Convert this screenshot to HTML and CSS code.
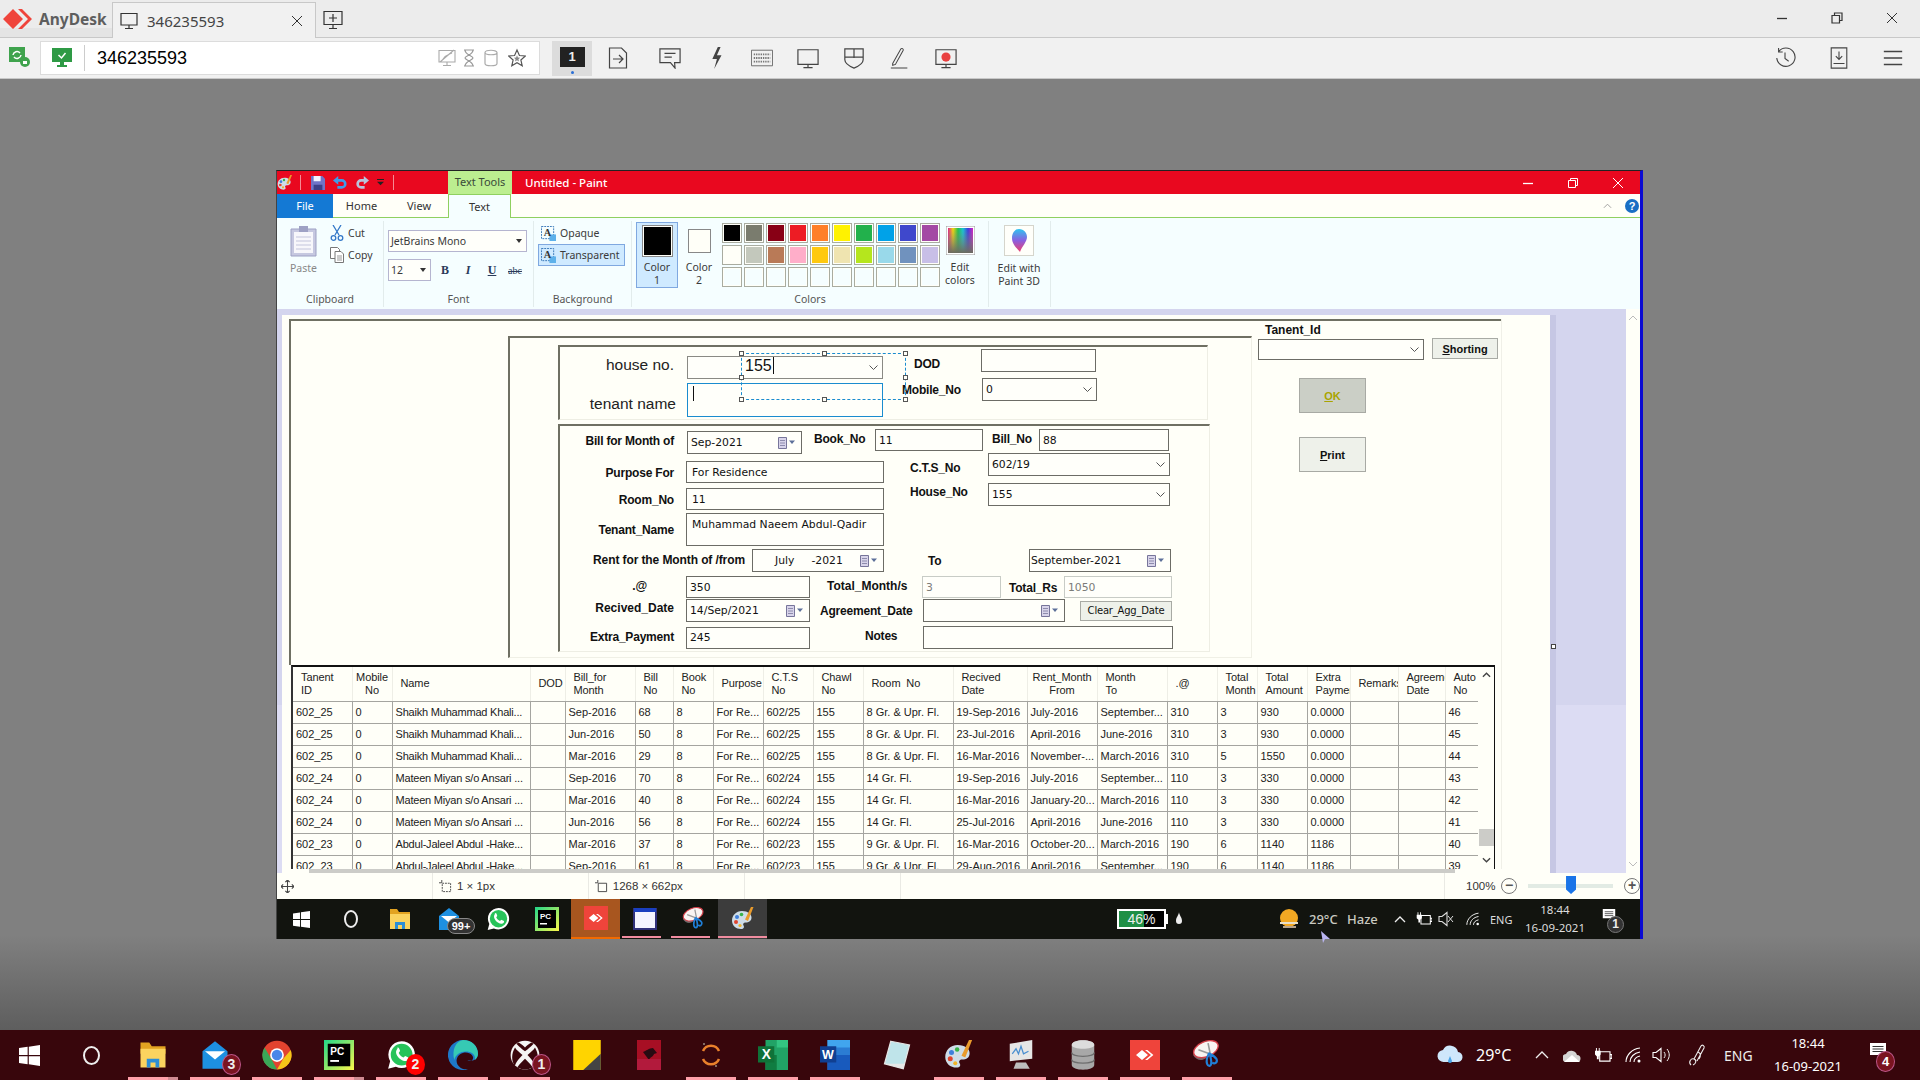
FILE: index.html
```html
<!DOCTYPE html>
<html lang="en">
<head>
    <meta charset="UTF-8">
    <title>AnyDesk - 346235593</title>
    <link rel="stylesheet" href="styles.css">
</head>
<body>
<svg class="defs" aria-hidden="true">
    <defs>
        <linearGradient id="g-spectrum" x1="0" x2="1" y1="0" y2="0">
            <stop offset="0" stop-color="#e0218a"/><stop offset=".2" stop-color="#f5d90a"/><stop offset=".4" stop-color="#1fc24a"/><stop offset=".6" stop-color="#14c6d8"/><stop offset=".8" stop-color="#3a3ae0"/><stop offset="1" stop-color="#d81fc4"/>
        </linearGradient>
        <linearGradient id="g-fade" x1="0" x2="0" y1="0" y2="1">
            <stop offset="0" stop-color="#888" stop-opacity="0"/><stop offset="1" stop-color="#6b6b5f"/>
        </linearGradient>
        <linearGradient id="g-drop" x1="0" x2="0" y1="0" y2="1">
            <stop offset="0" stop-color="#2ec4f0"/><stop offset=".5" stop-color="#8a5fe0"/><stop offset="1" stop-color="#ee3f6c"/>
        </linearGradient>
        <linearGradient id="g-pc" x1="0" x2="1" y1="0" y2="1">
            <stop offset="0" stop-color="#21d789"/><stop offset="1" stop-color="#fcf84a"/>
        </linearGradient>
        <symbol id="i-win" viewBox="0 0 18 18"><path fill="currentColor" d="M0 2.6 7.4 1.5v7.1H0zM8.4 1.4 18 0v8.6H8.4zM0 9.6h7.4v7L0 15.5zM8.4 9.6H18V18l-9.6-1.4z"/></symbol>
        <symbol id="i-mark" viewBox="0 0 30 20"><path fill="currentColor" d="M10 0 20 10 10 20 0 10zM15 0h4l10 10-10 10h-4l10-10z"/></symbol>
        <symbol id="i-screen" viewBox="0 0 18 18"><path fill="none" stroke="currentColor" stroke-width="1.2" d="M1 1.5h16v11.5H1zM9 13v3M5 16.500h8"/></symbol>
        <symbol id="i-chev" viewBox="0 0 9 5"><path fill="none" stroke="#555" d="M.5.5 4.500 4.500 8.500.5"/></symbol>
        <symbol id="i-cal" viewBox="0 0 17 12"><path fill="#d8d4ea" stroke="#77759a" d="M.5.5h8v11h-8z"/><path stroke="#8e8cad" d="M2 3.500h5M2 6h5M2 8.500h5"/><path fill="#5c6f99" d="M11 3.500h6l-3 3.500z"/></symbol>
        <symbol id="i-folder" viewBox="0 0 24 24"><path fill="#e2a321" d="M2 2h7l2 3h11v6H2z"/><path fill="#fbd35f" d="M2 7h20v15H2z"/><path fill="#2c8ed6" d="M7 15h10v7h-3v-4h-4v4H7z"/></symbol>
        <symbol id="i-mail" viewBox="0 0 24 24"><path fill="#1d90e2" d="M2 9 12 1l10 8v14H2z"/><path fill="#fff" d="M4 9h16l-8 6.500z"/></symbol>
        <symbol id="i-wa" viewBox="0 0 24 24"><path fill="#fff" d="M12.500 1A10.700 10.700 0 0 0 3.300 17L1.700 23l6.200-1.600A10.700 10.700 0 1 0 12.500 1z"/><circle cx="12.500" cy="11.700" r="8.700" fill="#27c35a"/><path fill="#fff" d="M8.500 6.500c1-.8 1.600-.6 2 .3l.7 1.600c.2.6-.7 1.300-1 1.900.8 1.700 2 2.900 3.800 3.700.6-.3 1.200-1.300 1.800-1.100l1.700.9c.7.3.8 1 .2 1.900-1.200 1.500-3.400 1.300-5.800-.2-3-1.900-5.600-6.200-2.400-9z"/></symbol>
        <symbol id="i-pc" viewBox="0 0 24 24"><rect width="24" height="24" fill="url(#g-pc)"/><rect x="3" y="3" width="18" height="18" fill="#000"/><text x="5" y="12" font-family="Liberation Sans" font-size="8" font-weight="700" fill="#fff">PC</text><rect x="5" y="16" width="7" height="1.500" fill="#fff"/></symbol>
        <symbol id="i-paint" viewBox="0 0 24 24"><path fill="#cfdde8" d="M11 4C5 4 1 8.500 1 13.500c0 5 4 8.500 9 8.500 3 0 3.500-2 2.500-3.500-1-1.500 0-3 2-3 3.500 0 6-1.500 6-5S17 4 11 4z"/><circle cx="6" cy="10" r="2" fill="#3f7fdc"/><circle cx="10.500" cy="7.500" r="1.800" fill="#38b44a"/><circle cx="5" cy="15" r="2" fill="#e0452f"/><circle cx="9" cy="18.500" r="1.600" fill="#f0b429"/><path fill="#e99b2c" d="M20 0h2.500L17 14l-3-1.500z"/></symbol>
        <symbol id="i-snip" viewBox="0 0 28 28"><path fill="#8e8488" opacity=".75" d="M1 14c2-3 8-3 11 0l1 3c-4 3-9 2-12-3z"/><ellipse cx="13" cy="8.500" rx="12" ry="7" transform="rotate(-22 13 8.500)" fill="#f8f4f2" stroke="#d5404a" stroke-width="1.300"/><path fill="none" stroke="#9a9a9a" stroke-width="1.500" d="M6 9l11 4M15 3l2 10"/><path fill="none" stroke="#1f7fd8" stroke-width="2" d="M16 12c-2 4-3 7-2 10 1 3 4 3 4-1 0-3-1-5-1-8 2 1 5 3 6 5 1 3-2 5-4 3"/></symbol>
        <symbol id="i-tile" viewBox="0 0 30 30"><rect width="30" height="30" fill="#ef443b"/><svg x="6" y="10" width="18" height="10" viewBox="0 0 30 20" preserveAspectRatio="none"><path fill="#fff" d="M10 0 20 10 10 20 0 10zM15 0h4l10 10-10 10h-4l10-10z"/></svg></symbol>
        <symbol id="i-bubble" viewBox="0 0 18 18"><path fill="#fff" d="M1 0h16v12h-3v4l-4-4H1z"/><path stroke="#333" d="M3.500 3.500h11M3.500 6h11M3.500 8.500h11"/></symbol>
        <symbol id="i-wifi" viewBox="0 0 18 16"><path fill="none" stroke="currentColor" stroke-width="1.100" d="M1 15C1 8 7 2 15 1M5 15c0-5 4-9 10-10M9 15c0-3 2-5 6-6"/><circle cx="14" cy="14" r="1.500" fill="currentColor"/></symbol>
        <symbol id="i-power" viewBox="0 0 20 16"><path fill="none" stroke="currentColor" stroke-width="1.200" d="M7 4h11v10H7zM18 7h2v4h-2"/><path fill="currentColor" d="M3 0h1v3h2V0h1v3h1v4L6 9v3H4V9L2 7V3h1z"/></symbol>
        <symbol id="i-speaker" viewBox="0 0 12 16"><path fill="none" stroke="currentColor" stroke-width="1.100" d="M1 5.500h3L9 1.500v13l-5-4H1z"/></symbol>
        <symbol id="i-a" viewBox="0 0 16 16"><path fill="none" stroke="#3273b5" stroke-dasharray="2 1" d="M.5.500h13v13H.5z"/><rect x="9" y="9" width="7" height="7" fill="#5db1ea"/><text x="3" y="11" font-family="Liberation Serif" font-size="11" font-weight="700" fill="#333">A</text></symbol>
    </defs>
</svg>

<div class="app">
    <header class="tabbar">
        <div class="brand">
            <svg class="brand-mark"><use href="#i-mark"/></svg>
            <span class="brand-name">AnyDesk</span>
        </div>
        <div class="session-tab">
            <svg class="tab-screen"><use href="#i-screen"/></svg>
            <span class="tab-id">346235593</span>
            <svg class="tab-close" viewBox="0 0 12 12"><path stroke="#333" d="M1 1l10 10M11 1 1 11"/></svg>
        </div>
        <svg class="new-tab" viewBox="0 0 20 20"><path fill="none" stroke="#333" stroke-width="1.200" d="M1 1.500h18v13H1zM10 15v3M6 18.500h8M10 4v8M6 8h8"/></svg>
        <div class="ctl-buttons">
            <svg viewBox="0 0 12 12"><path stroke="#333" stroke-width="1.300" d="M1 6.500h10"/></svg>
            <svg viewBox="0 0 12 12"><path fill="none" stroke="#333" stroke-width="1.200" d="M1 3.500h7.500V11H1zM3.500 3.500V1H11v7.500H8.500"/></svg>
            <svg viewBox="0 0 12 12"><path stroke="#333" d="M1 1l10 10M11 1 1 11"/></svg>
        </div>
    </header>

    <nav class="toolbar">
        <svg class="tb-perm" viewBox="0 0 22 22"><path fill="#3fa34d" d="M0 0h16v15H0z"/><circle cx="16" cy="15" r="5" fill="#3fa34d"/><path stroke="#fff" stroke-width="1.500" fill="none" d="M4 8a4 4 0 0 1 7-2M12 8a4 4 0 0 1-7 2"/><path fill="#fff" d="M14 14h4v3h-4z"/></svg>
        <div class="address">
            <svg class="addr-ok" viewBox="0 0 20 20"><path fill="#2e9a45" d="M0 0h20v14H0zM8 14h4v3h3v2H5v-2h3z"/><path fill="none" stroke="#fff" stroke-width="1.500" d="M6.500 7l3 3 4-5"/></svg>
            <span class="addr-text">346235593</span>
            <svg class="addr-icon" viewBox="0 0 18 18"><path fill="none" stroke="#aaa" stroke-width="1.100" d="M1 1.500h16V13H1zM9 13v3M5 16.500h8M2 13 16 1M5 10c3-4 7-5 9-6"/></svg>
            <svg class="addr-icon" viewBox="0 0 18 18"><path fill="none" stroke="#999" stroke-width="1.200" d="M4 1h10M4 17h10M5 1c0 5 8 6 8 8s-8 3-8 8M13 1c0 5-8 6-8 8s8 3 8 8"/></svg>
            <svg class="addr-icon" viewBox="0 0 18 18"><path fill="none" stroke="#aaa" stroke-width="1.200" d="M3 3.500v11c0 3 12 3 12 0v-11c0-3-12-3-12 0zM3 3.500c0 3 12 3 12 0"/></svg>
            <svg class="addr-icon" viewBox="0 0 20 20"><path fill="none" stroke="#555" stroke-width="1.300" d="M10 1l2.700 6.200 6.600.6-5 4.400 1.500 6.500-5.800-3.400-5.800 3.400 1.500-6.500-5-4.400 6.600-.6z"/><path fill="#888" d="M10 7l1 2.400 2.500.2-1.900 1.700.6 2.500-2.200-1.300-2.200 1.300.6-2.500-1.900-1.700 2.500-.2z"/></svg>
        </div>
        <div class="display-btn"><span class="display-chip">1</span><i class="display-dot"></i></div>
        <svg class="tb-icon tb-send" viewBox="0 0 20 22"><path fill="none" stroke="#444" stroke-width="1.200" d="M1.500 1h12l5 5v15h-17zM5 12h10M11 8l4 4-4 4"/></svg>
        <svg class="tb-icon tb-chat" viewBox="0 0 24 24"><path fill="none" stroke="#444" stroke-width="1.300" d="M1 2h22v15h-6l.5 6-5-6H1zM6 7h12M6 11h8"/></svg>
        <svg class="tb-icon" viewBox="0 0 22 24"><path fill="#444" d="M13 0 7 13h5l-3 11 8-15h-5l4-9z"/></svg>
        <svg class="tb-icon" viewBox="0 0 24 20"><path fill="none" stroke="#666" d="M.5 1.500h23v17H.5z"/><path stroke="#777" stroke-width="2" stroke-dasharray="1.500 1" d="M3 6h18M3 10h18M3 14h18"/></svg>
        <svg class="tb-icon" viewBox="0 0 24 24"><path fill="none" stroke="#444" stroke-width="1.300" d="M1 3h22v16H1zM12 19v3M7 22.500h10"/></svg>
        <svg class="tb-icon" viewBox="0 0 22 24"><path fill="none" stroke="#444" stroke-width="1.300" d="M1 2h20v12c0 4-5 7-10 9-5-2-10-5-10-9zM11 2v10M1 11h20"/></svg>
        <svg class="tb-icon" viewBox="0 0 24 24"><path fill="none" stroke="#444" stroke-width="1.100" d="M4 18 13 2c1-1 3 0 2.500 1.500L7 19l-3 1zM2 23h18"/></svg>
        <svg class="tb-icon" viewBox="0 0 24 24"><path fill="none" stroke="#444" stroke-width="1.300" d="M1 3h22v16H1zM12 19v3M7 22.500h10"/><circle cx="12" cy="11" r="5" fill="#e94040"/></svg>
        <div class="tb-right">
            <svg class="tb-icon" viewBox="0 0 24 24"><path fill="none" stroke="#444" stroke-width="1.200" d="M5 5a10 10 0 1 1-2 7M5 1v4.500h4.500M12 6v6.500l4 3"/></svg>
            <svg class="tb-icon" viewBox="0 0 20 24"><path fill="none" stroke="#444" stroke-width="1.200" d="M1.500 1h17v22h-17zM10 5v8M6.500 10l3.500 3.500 3.500-3.500M4 18h12"/></svg>
            <svg class="tb-icon" viewBox="0 0 24 24"><path stroke="#444" stroke-width="1.600" d="M2 5h20M2 12h20M2 19h20"/></svg>
        </div>
    </nav>

    <main class="remote">
        <section class="paint-window">
            <div class="titlebar">
                <div class="qat">
                    <svg class="qat-logo"><use href="#i-paint"/></svg>
                    <i class="qat-sep"></i>
                    <svg class="qat-btn" viewBox="0 0 16 16"><path fill="#6f74c8" d="M0 0h13l3 3v13H0z"/><path fill="#f4f4ff" d="M3 0h8v6H3z"/><path fill="#3c3f87" d="M3 10h10v6H3z"/></svg>
                    <svg class="qat-btn" viewBox="0 0 16 16"><path fill="none" stroke="#3f9be8" stroke-width="3" d="M4 5h6a4 4 0 0 1 0 8H5"/><path fill="#3f9be8" d="M6 0v10L0 5z"/></svg>
                    <svg class="qat-btn" viewBox="0 0 16 16"><path fill="none" stroke="#b8c4dc" stroke-width="3" d="M12 5H7a4 4 0 0 0 0 8h4"/><path fill="#b8c4dc" d="M10 0v10l6-5z"/></svg>
                    <svg class="qat-more" viewBox="0 0 8 8"><path fill="#222" d="M0 0h8v1H0zM0 3h8L4 7z"/></svg>
                    <i class="qat-sep"></i>
                </div>
                <div class="context-tab">Text Tools</div>
                <div class="doc-title">Untitled - Paint</div>
                <div class="win-btns">
                    <svg viewBox="0 0 12 12"><path stroke="#fff" stroke-width="1.300" d="M1 6.500h10"/></svg>
                    <svg viewBox="0 0 12 12"><path fill="none" stroke="#fff" d="M1.500 3.500h7v7h-7zM3.500 3.500v-2h7v7h-2"/></svg>
                    <svg viewBox="0 0 12 12"><path stroke="#fff" d="M1 1l10 10M11 1 1 11"/></svg>
                </div>
            </div>

            <div class="ribbon-tabs">
                <div class="rtab rtab-file">File</div>
                <div class="rtab rtab-home">Home</div>
                <div class="rtab rtab-view">View</div>
                <div class="rtab rtab-text">Text</div>
                <svg class="ribbon-min" viewBox="0 0 10 6"><path fill="none" stroke="#999" d="M1 5l4-4 4 4"/></svg>
                <span class="help">?</span>
            </div>

            <div class="ribbon">
                <div class="rgroup rg-clip">
                    <div class="rbody">
                        <div class="paste">
                            <svg class="paste-icon" viewBox="0 0 27 32"><path fill="#c6c8e0" stroke="#9ea1c4" d="M1 4h25v27H1z"/><path fill="#f7f7fb" d="M4 7h19v21H4z"/><path stroke="#c3c5dc" d="M6 12h15M6 16h15M6 20h15M6 24h15"/><path fill="#9ea1c4" d="M9 1h9v6H9z"/></svg>
                            <span class="paste-label">Paste</span>
                        </div>
                        <div class="clip-actions">
                            <div class="clip-row"><svg class="clip-icon" viewBox="0 0 14 16"><path fill="none" stroke="#3478c8" stroke-width="1.300" d="M3 0l6 10M11 0 5 10"/><circle cx="3.500" cy="13" r="2.300" fill="none" stroke="#3478c8" stroke-width="1.300"/><circle cx="10.500" cy="13" r="2.300" fill="none" stroke="#3478c8" stroke-width="1.300"/></svg>Cut</div>
                            <div class="clip-row"><svg class="clip-icon" viewBox="0 0 14 16"><path fill="#fff" stroke="#777" d="M.5.500h7l2 2v9h-9z"/><path fill="#fff" stroke="#777" d="M5 4.500h6l2.500 2.500v8.500H5z"/><path stroke="#999" d="M7 9h5M7 11h5M7 13h5"/></svg>Copy</div>
                        </div>
                    </div>
                    <div class="rlabel">Clipboard</div>
                </div>
                <div class="rgroup rg-font">
                    <div class="rbody rbody-col">
                        <div class="select font-name">JetBrains Mono<i class="select-arrow"></i></div>
                        <div class="font-tools">
                            <div class="select font-size">12<i class="select-arrow"></i></div>
                            <span class="fmt fmt-b">B</span>
                            <span class="fmt fmt-i">I</span>
                            <span class="fmt fmt-u">U</span>
                            <span class="fmt fmt-s">abc</span>
                        </div>
                    </div>
                    <div class="rlabel">Font</div>
                </div>
                <div class="rgroup rg-bg">
                    <div class="rbody rbody-col">
                        <div class="bg-opt"><svg class="bg-icon"><use href="#i-a"/></svg>Opaque</div>
                        <div class="bg-opt bg-on"><svg class="bg-icon"><use href="#i-a"/></svg>Transparent</div>
                    </div>
                    <div class="rlabel">Background</div>
                </div>
                <div class="rgroup rg-colors">
                    <div class="rbody">
                        <div class="color-pick color-1">
                            <span class="cswatch cswatch-black"></span>
                            <span class="color-label">Color<br>1</span>
                        </div>
                        <div class="color-pick color-2">
                            <span class="cswatch cswatch-white"></span>
                            <span class="color-label">Color<br>2</span>
                        </div>
                        <div class="palette">
                            <i class="p-1"></i><i class="p-2"></i><i class="p-3"></i><i class="p-4"></i><i class="p-5"></i><i class="p-6"></i><i class="p-7"></i><i class="p-8"></i><i class="p-9"></i><i class="p-10"></i>
                            <i class="p-11"></i><i class="p-12"></i><i class="p-13"></i><i class="p-14"></i><i class="p-15"></i><i class="p-16"></i><i class="p-17"></i><i class="p-18"></i><i class="p-19"></i><i class="p-20"></i>
                            <i></i><i></i><i></i><i></i><i></i><i></i><i></i><i></i><i></i><i></i>
                        </div>
                        <div class="big-tool edit-colors">
                            <svg class="spectrum" viewBox="0 0 29 29"><rect width="29" height="29" fill="#fff" stroke="#999"/><rect x="2" y="2" width="25" height="25" fill="url(#g-spectrum)"/><rect x="2" y="2" width="25" height="25" fill="url(#g-fade)"/></svg>
                            <span class="big-label">Edit<br>colors</span>
                        </div>
                    </div>
                    <div class="rlabel rlabel-colors">Colors</div>
                </div>
                <div class="rgroup rg-3d">
                    <div class="big-tool">
                        <svg class="drop3d" viewBox="0 0 30 31"><rect x=".5" y=".5" width="29" height="30" fill="#fffffa" stroke="#d5d5cc"/><path fill="url(#g-drop)" d="M15 4c5 0 8 4 8 8 0 5-5 9-7 15-2-3-8-7-8-14 0-5 3-9 7-9z"/></svg>
                        <span class="big-label">Edit with<br>Paint 3D</span>
                    </div>
                </div>
            </div>

            <div class="workspace">
                <div class="canvas-area">
                    <div class="canvas">
                        <div class="shot">
                            <div class="shot-top">
                                <div class="outer-group">
                                    <div class="group group-top">
                                        <div class="gt-left">
                                            <div class="gt-row">
                                                <span class="big-lbl">house no.</span>
                                                <div class="field f-house"><span class="house-val">155</span><svg class="chev"><use href="#i-chev"/></svg></div>
                                            </div>
                                            <div class="gt-row gt-row-2">
                                                <span class="big-lbl">tenant name</span>
                                                <div class="field f-tenant"><i class="caret"></i></div>
                                            </div>
                                        </div>
                                        <div class="gt-right">
                                            <div class="gt-row">
                                                <span class="lbl l-dod">DOD</span>
                                                <div class="field f-dod"></div>
                                            </div>
                                            <div class="gt-row gt-row-mobile">
                                                <span class="lbl l-mobile">Mobile_No</span>
                                                <div class="field f-dod">0<svg class="chev"><use href="#i-chev"/></svg></div>
                                            </div>
                                        </div>
                                        <div class="text-box">
                                            <i class="h h-tl"></i><i class="h h-tc"></i><i class="h h-tr"></i><i class="h h-ml"></i><i class="h h-mr"></i><i class="h h-bl"></i><i class="h h-bc"></i><i class="h h-br"></i>
                                        </div>
                                    </div>

                                    <div class="group group-bill">
                                        <div class="row row-1">
                                            <span class="lbl l-main l-bill">Bill for Month of</span>
                                            <div class="field picker f-bill">Sep-2021<svg class="cal"><use href="#i-cal"/></svg></div>
                                            <span class="lbl l-book">Book_No</span>
                                            <div class="field f-book">11</div>
                                            <span class="lbl l-billno">Bill_No</span>
                                            <div class="field f-billno">88</div>
                                        </div>
                                        <div class="row row-2">
                                            <div class="col-left">
                                                <div class="row">
                                                    <span class="lbl l-main">Purpose For</span>
                                                    <div class="field f-wide">For Residence</div>
                                                </div>
                                                <div class="row row-room">
                                                    <span class="lbl l-main">Room_No</span>
                                                    <div class="field f-wide">11</div>
                                                </div>
                                                <div class="row row-tenant">
                                                    <span class="lbl l-main">Tenant_Name</span>
                                                    <div class="field f-wide f-name">Muhammad Naeem Abdul-Qadir</div>
                                                </div>
                                            </div>
                                            <div class="col-right">
                                                <div class="row">
                                                    <span class="lbl l-cts">C.T.S_No</span>
                                                    <div class="field f-cts">602/19<svg class="chev"><use href="#i-chev"/></svg></div>
                                                </div>
                                                <div class="row row-house">
                                                    <span class="lbl l-cts">House_No</span>
                                                    <div class="field f-cts">155<svg class="chev"><use href="#i-chev"/></svg></div>
                                                </div>
                                            </div>
                                        </div>
                                        <div class="row row-3">
                                            <span class="lbl l-rent">Rent for the Month of /from</span>
                                            <div class="field picker f-from"><span class="from-month">July</span><span class="from-year">-2021</span><svg class="cal"><use href="#i-cal"/></svg></div>
                                            <span class="lbl l-to">To</span>
                                            <div class="field picker f-to">September-2021<svg class="cal"><use href="#i-cal"/></svg></div>
                                        </div>
                                        <div class="row row-4">
                                            <span class="lbl l-main l-at">.@</span>
                                            <div class="field f-mid">350</div>
                                            <span class="lbl l-months">Total_Month/s</span>
                                            <div class="field field-off f-months">3</div>
                                            <span class="lbl l-total">Total_Rs</span>
                                            <div class="field field-off f-total">1050</div>
                                        </div>
                                        <div class="row row-5">
                                            <span class="lbl l-main l-recv">Recived_Date</span>
                                            <div class="field picker f-mid">14/Sep/2021<svg class="cal"><use href="#i-cal"/></svg></div>
                                            <span class="lbl l-agree">Agreement_Date</span>
                                            <div class="field picker f-agree"><svg class="cal"><use href="#i-cal"/></svg></div>
                                            <button class="form-btn btn-clear" type="button">Clear_Agg_Date</button>
                                        </div>
                                        <div class="row row-6">
                                            <span class="lbl l-main l-extra">Extra_Payment</span>
                                            <div class="field f-mid">245</div>
                                            <span class="lbl l-notes">Notes</span>
                                            <div class="field f-notes"></div>
                                        </div>
                                    </div>
                                </div>

                                <aside class="side-panel">
                                    <div class="side-title">Tanent_Id</div>
                                    <div class="side-search">
                                        <div class="field f-side"><svg class="chev"><use href="#i-chev"/></svg></div>
                                        <button class="form-btn btn-short" type="button"><u>S</u>horting</button>
                                    </div>
                                    <button class="form-btn btn-big btn-ok" type="button"><u>O</u>K</button>
                                    <button class="form-btn btn-big btn-print" type="button"><u>P</u>rint</button>
                                </aside>
                            </div>

                            <div class="grid-wrap">
                                <table class="grid">
                                    <thead>
                                        <tr><th>Tanent<br>ID</th><th class="mid">Mobile<br>No</th><th>Name</th><th>DOD</th><th>Bill_for<br>Month</th><th>Bill<br>No</th><th>Book<br>No</th><th>Purpose</th><th>C.T.S<br>No</th><th>Chawl<br>No</th><th>Room&nbsp; No</th><th>Recived<br>Date</th><th class="mid">Rent_Month<br>From</th><th>Month<br>To</th><th>.@</th><th>Total<br>Month</th><th>Total<br>Amount</th><th>Extra<br>Payment</th><th>Remarks</th><th>Agreement<br>Date</th><th>Auto<br>No</th></tr>
                                    </thead>
                                    <tbody>
                                        <tr><td>602_25</td><td>0</td><td>Shaikh Muhammad Khali...</td><td></td><td>Sep-2016</td><td>68</td><td>8</td><td>For Re...</td><td>602/25</td><td>155</td><td>8 Gr. &amp; Upr. Fl.</td><td>19-Sep-2016</td><td>July-2016</td><td>September...</td><td>310</td><td>3</td><td>930</td><td>0.0000</td><td></td><td></td><td>46</td></tr>
                                        <tr><td>602_25</td><td>0</td><td>Shaikh Muhammad Khali...</td><td></td><td>Jun-2016</td><td>50</td><td>8</td><td>For Re...</td><td>602/25</td><td>155</td><td>8 Gr. &amp; Upr. Fl.</td><td>23-Jul-2016</td><td>April-2016</td><td>June-2016</td><td>310</td><td>3</td><td>930</td><td>0.0000</td><td></td><td></td><td>45</td></tr>
                                        <tr><td>602_25</td><td>0</td><td>Shaikh Muhammad Khali...</td><td></td><td>Mar-2016</td><td>29</td><td>8</td><td>For Re...</td><td>602/25</td><td>155</td><td>8 Gr. &amp; Upr. Fl.</td><td>16-Mar-2016</td><td>November-...</td><td>March-2016</td><td>310</td><td>5</td><td>1550</td><td>0.0000</td><td></td><td></td><td>44</td></tr>
                                        <tr><td>602_24</td><td>0</td><td>Mateen Miyan s/o Ansari ...</td><td></td><td>Sep-2016</td><td>70</td><td>8</td><td>For Re...</td><td>602/24</td><td>155</td><td>14 Gr. Fl.</td><td>19-Sep-2016</td><td>July-2016</td><td>September...</td><td>110</td><td>3</td><td>330</td><td>0.0000</td><td></td><td></td><td>43</td></tr>
                                        <tr><td>602_24</td><td>0</td><td>Mateen Miyan s/o Ansari ...</td><td></td><td>Mar-2016</td><td>40</td><td>8</td><td>For Re...</td><td>602/24</td><td>155</td><td>14 Gr. Fl.</td><td>16-Mar-2016</td><td>January-20...</td><td>March-2016</td><td>110</td><td>3</td><td>330</td><td>0.0000</td><td></td><td></td><td>42</td></tr>
                                        <tr><td>602_24</td><td>0</td><td>Mateen Miyan s/o Ansari ...</td><td></td><td>Jun-2016</td><td>56</td><td>8</td><td>For Re...</td><td>602/24</td><td>155</td><td>14 Gr. Fl.</td><td>25-Jul-2016</td><td>April-2016</td><td>June-2016</td><td>110</td><td>3</td><td>330</td><td>0.0000</td><td></td><td></td><td>41</td></tr>
                                        <tr><td>602_23</td><td>0</td><td>Abdul-Jaleel Abdul -Hake...</td><td></td><td>Mar-2016</td><td>37</td><td>8</td><td>For Re...</td><td>602/23</td><td>155</td><td>9 Gr. &amp; Upr. Fl.</td><td>16-Mar-2016</td><td>October-20...</td><td>March-2016</td><td>190</td><td>6</td><td>1140</td><td>1186</td><td></td><td></td><td>40</td></tr>
                                        <tr><td>602_23</td><td>0</td><td>Abdul-Jaleel Abdul -Hake...</td><td></td><td>Sep-2016</td><td>61</td><td>8</td><td>For Re...</td><td>602/23</td><td>155</td><td>9 Gr. &amp; Upr. Fl.</td><td>29-Aug-2016</td><td>April-2016</td><td>September...</td><td>190</td><td>6</td><td>1140</td><td>1186</td><td></td><td></td><td>39</td></tr>
                                    </tbody>
                                </table>
                                <div class="grid-scroll">
                                    <svg class="gs-arrow" viewBox="0 0 10 6"><path fill="none" stroke="#444" stroke-width="1.500" d="M1 5l4-4 4 4"/></svg>
                                    <i class="gs-thumb"></i>
                                    <svg class="gs-arrow" viewBox="0 0 10 6"><path fill="none" stroke="#444" stroke-width="1.500" d="M1 1l4 4 4-4"/></svg>
                                </div>
                            </div>
                        </div>
                        <i class="canvas-handle"></i>
                    </div>
                </div>
                <div class="vscroll">
                    <svg viewBox="0 0 10 6"><path fill="none" stroke="#bbb" d="M1 5l4-4 4 4"/></svg>
                    <svg viewBox="0 0 10 6"><path fill="none" stroke="#bbb" d="M1 1l4 4 4-4"/></svg>
                </div>
                <i class="hscroll"></i>
            </div>

            <footer class="statusbar">
                <div class="st-cell st-move"><svg viewBox="0 0 12 12"><path fill="none" stroke="#444" d="M6 0v12M0 6h12M4 2l2-2 2 2M4 10l2 2 2-2M2 4 0 6l2 2M10 4l2 2-2 2"/></svg></div>
                <div class="st-cell"><svg viewBox="0 0 14 14"><path fill="none" stroke="#444" stroke-dasharray="2 1" d="M3.500 3.500h9v9h-9z"/><path stroke="#444" d="M3 0v3M0 3h3"/></svg><span>1 × 1px</span></div>
                <div class="st-cell"><svg viewBox="0 0 14 14"><path fill="none" stroke="#444" d="M3.500 3.500h9v9h-9z"/><path stroke="#444" d="M3 0v3M0 3h3"/></svg><span>1268 × 662px</span></div>
                <div class="st-cell"></div>
                <div class="st-spacer"></div>
                <div class="st-zoom">
                    <span class="zoom-val">100%</span>
                    <span class="zoom-btn">−</span>
                    <div class="slider"><i class="slider-thumb"></i></div>
                    <span class="zoom-btn zoom-plus">+</span>
                </div>
            </footer>

            <div class="inner-taskbar">
                <div class="slot"><svg class="ic-18 white"><use href="#i-win"/></svg></div>
                <div class="slot"><i class="cortana"></i></div>
                <div class="slot"><svg class="ic-24"><use href="#i-folder"/></svg></div>
                <div class="slot"><svg class="ic-24"><use href="#i-mail"/></svg><span class="count">99+</span></div>
                <div class="slot"><svg class="ic-24"><use href="#i-wa"/></svg></div>
                <div class="slot"><svg class="ic-24"><use href="#i-pc"/></svg></div>
                <div class="slot slot-anydesk"><svg class="ic-24"><use href="#i-tile"/></svg></div>
                <div class="slot slot-open"><svg class="ic-24" viewBox="0 0 24 24"><rect x="1" y="1" width="22" height="22" fill="#f4f4ff"/><path fill="none" stroke="#30307a" stroke-width="2" d="M1 2h22v20H1z"/><rect x="1" y="1" width="22" height="4" fill="#1a3fbf"/></svg></div>
                <div class="slot slot-open"><svg class="ic-24"><use href="#i-snip"/></svg></div>
                <div class="slot slot-open slot-paint"><svg class="ic-24"><use href="#i-paint"/></svg></div>
                <div class="inner-tray">
                    <div class="battery"><span class="battery-text">46%</span></div>
                    <i class="battery-nub"></i>
                    <svg class="it-drop" viewBox="0 0 6 14"><path fill="#eee" d="M3 0c0 3 3 5 3 9a3 3 0 0 1-6 0c0-4 3-6 3-9z"/></svg>
                    <svg class="it-sun" viewBox="0 0 20 22"><circle cx="10" cy="10" r="9" fill="#f2a823"/><path fill="#e9dfca" d="M1 14h18v2H1z"/><path fill="#b8a48c" d="M4 18h13v2H4z"/></svg>
                    <span class="it-temp">29°C</span>
                    <span class="it-haze">Haze</span>
                    <svg class="it-chev" viewBox="0 0 12 7"><path fill="none" stroke="#eee" stroke-width="1.300" d="M1 6l5-5 5 5"/></svg>
                    <svg class="it-power white"><use href="#i-power"/></svg>
                    <svg class="it-speaker" viewBox="0 0 16 16"><use href="#i-speaker" width="12" height="16"/><path stroke="#ddd" d="M10 5l5 6M15 5l-5 6"/></svg>
                    <svg class="it-wifi white"><use href="#i-wifi"/></svg>
                    <span class="it-eng">ENG</span>
                    <div class="it-clock"><span>18:44</span><span>16-09-2021</span></div>
                    <div class="it-notif"><svg class="it-bubble"><use href="#i-bubble"/></svg><span class="it-badge">1</span></div>
                </div>
                <svg class="cursor" viewBox="0 0 10 12"><path fill="#b9b4f0" d="M0 0l9 8H4l-2 4z"/></svg>
            </div>
        </section>
    </main>

    <footer class="taskbar">
        <div class="apps">
            <div class="app-slot"><svg class="ic-22 white"><use href="#i-win"/></svg></div>
            <div class="app-slot"><i class="cortana cortana-lg"></i></div>
            <div class="app-slot on multi"><svg class="ic-30"><use href="#i-folder"/></svg></div>
            <div class="app-slot on"><svg class="ic-30"><use href="#i-mail"/></svg><span class="badge">3</span></div>
            <div class="app-slot on"><svg class="ic-30" viewBox="0 0 24 24"><circle cx="12" cy="12" r="11.500" fill="#e2432f"/><path fill="#3aa757" d="M12 23.500A11.500 11.500 0 0 1 2 6l6 10z"/><path fill="#f5c518" d="M23 8a11.500 11.500 0 0 1-11 15.500L17 15z"/><circle cx="12" cy="12" r="5.500" fill="#fff"/><circle cx="12" cy="12" r="4.200" fill="#4a86e8"/></svg></div>
            <div class="app-slot on multi"><svg class="ic-30"><use href="#i-pc"/></svg></div>
            <div class="app-slot on"><svg class="ic-30"><use href="#i-wa"/></svg><span class="badge badge-red">2</span></div>
            <div class="app-slot on"><svg class="ic-30" viewBox="0 0 24 24"><path fill="#1e78c8" d="M12 0a12 12 0 1 0 4 23.300c-5 1-10-3-9-8C8 11 13 9 17 10.500c2.500 1 4 3.500 2.500 5.500-1 1.200-3 1-4 0 6 2 8.500-2 8.500-5C24 5 19 0 12 0z"/><path fill="#36c9b4" d="M12 0c7 0 12 5 12 11 0 2-1 4-2.500 5 .5-3-.5-5.500-4.500-6.500C12 8 6 11 5 16 3 8 6 1 12 0z"/></svg></div>
            <div class="app-slot on"><svg class="ic-30" viewBox="0 0 24 24"><circle cx="12" cy="12" r="11.500" fill="#f5f5f5"/><path fill="#3a060c" d="M12 9C9 7 6 4 5 3l2-1c2 1 4 3 5 4 1-1 3-3 5-4l2 1c-1 1-4 4-7 6zM10 12C7 15 4 19 4 21 1 17 1 11 4 6c1 2 4 4 6 6zM14 12c3 3 6 7 6 9 3-4 3-10 0-15-1 2-4 4-6 6zM12 15c2 2 6 6 6 7-4 2-8 2-12 0 0-1 4-5 6-7z"/></svg><span class="badge">1</span></div>
            <div class="app-slot"><svg class="ic-30" viewBox="0 0 24 24"><path fill="#ffd400" d="M1 0h22v24H1z"/><path fill="#444" d="M23 11v13H9z"/></svg></div>
            <div class="app-slot"><svg class="ic-30" viewBox="0 0 24 30"><rect width="24" height="30" fill="#a70f24"/><path fill="#280b12" d="M6 12c3-1 6-4 10-4l4 5-3 1c-1 3-4 3-5 6-2-3-4-5-6-8z"/><rect y="19" width="24" height="11" fill="#b21a3c"/></svg></div>
            <div class="app-slot on"><svg class="ic-30" viewBox="0 0 24 30"><path fill="none" stroke="#e9812c" stroke-width="2.500" d="M4 11C7 4 17 4 20 11M4 19c3 7 13 7 16 0"/><circle cx="5" cy="4" r="1" fill="#9a8d80"/><circle cx="17" cy="26" r="1" fill="#9a8d80"/></svg></div>
            <div class="app-slot on"><svg class="ic-30" viewBox="0 0 24 24"><path fill="#21a366" d="M6 0h18v24H6z"/><path fill="#107c41" d="M6 12h9v12H6z"/><path fill="#33c481" d="M15 0h9v6h-9z"/><rect y="5" width="13" height="13" fill="#0f7238"/><text x="3" y="15.500" font-family="Liberation Sans" font-size="11" font-weight="700" fill="#fff">X</text></svg></div>
            <div class="app-slot on"><svg class="ic-30" viewBox="0 0 24 24"><path fill="#2b7cd3" d="M6 0h18v24H6z"/><path fill="#185abd" d="M6 12h18v12H6z"/><path fill="#41a5ee" d="M6 0h18v6H6z"/><rect y="5" width="13" height="13" fill="#103f91"/><text x="1.500" y="15.500" font-family="Liberation Sans" font-size="10" font-weight="700" fill="#fff">W</text></svg></div>
            <div class="app-slot"><svg class="ic-30" viewBox="0 0 24 24"><path fill="#bfe4ea" stroke="#e5e5e5" d="M7 1l15 3-5 19-15-4z"/><path fill="#e8e8e8" d="M2 19l15 4 1-4z"/></svg></div>
            <div class="app-slot on"><svg class="ic-30"><use href="#i-paint"/></svg></div>
            <div class="app-slot on"><svg class="ic-30" viewBox="0 0 24 24"><path fill="#e6e6e6" d="M3 3l18-3v15l-18 2z"/><path fill="none" stroke="#4a8fd0" d="M5 11l3-4 2 4 2-6 2 6 4-2"/><path fill="#bdbdbd" d="M8 18h8l3 5H6z"/></svg></div>
            <div class="app-slot on"><svg class="ic-30" viewBox="0 0 24 24"><path fill="#a8a8a8" d="M3 4c0-5 18-5 18 0v16c0 5-18 5-18 0z"/><path fill="#dcdcdc" d="M3 4c0 4 18 4 18 0 0-5-18-5-18 0z"/><path fill="none" stroke="#6e6e6e" d="M3 10c0 4 18 4 18 0M3 15.500c0 4 18 4 18 0"/></svg></div>
            <div class="app-slot on"><svg class="ic-30"><use href="#i-tile"/></svg></div>
            <div class="app-slot on"><svg class="ic-30"><use href="#i-snip"/></svg></div>
        </div>
        <div class="tray">
            <svg class="tr-cloud" viewBox="0 0 26 22"><path fill="#cfe7fb" d="M7 18a6 6 0 0 1-1-12 8 8 0 0 1 15 2 5 5 0 0 1-1 10z"/><path fill="#4aa5e8" d="M13 12l2 5a2 2 0 0 1-4 0z"/></svg>
            <span class="tr-temp">29°C</span>
            <svg class="tr-chev" viewBox="0 0 14 8"><path fill="none" stroke="#eee" stroke-width="1.300" d="M1 7l6-6 6 6"/></svg>
            <svg class="tr-drive" viewBox="0 0 18 14"><path fill="#d5d5d5" d="M4 14a4 4 0 0 1-1-8 6 6 0 0 1 11 1 3.500 3.500 0 0 1 0 7z"/><path fill="#fff" d="M1 14l8-7 8 7z"/></svg>
            <svg class="tr-power white"><use href="#i-power"/></svg>
            <svg class="tr-wifi white"><use href="#i-wifi"/></svg>
            <svg class="tr-sound" viewBox="0 0 20 18"><use href="#i-speaker" width="12" height="16" y="1" class="white"/><path fill="none" stroke="#eee" d="M12 6c1.500 2 1.500 4 0 6M15 3c3 4 3 8 0 12"/></svg>
            <svg class="tr-pen" viewBox="0 0 18 22"><path fill="none" stroke="#eee" stroke-width="1.100" d="M3 21c-3-3 0-7 3-6s2 5-1 6M6 15 13 2c1-2 4 0 3 2L9 17M10 8c3 1 3 4 1 7"/></svg>
            <span class="tr-eng">ENG</span>
            <div class="tr-clock"><span>18:44</span><span>16-09-2021</span></div>
            <div class="tr-notif"><svg class="tr-bubble"><use href="#i-bubble"/></svg><span class="tr-badge">4</span></div>
        </div>
    </footer>
</div>
</body>
</html>
```

FILE: styles.css
```css
* {
    box-sizing: border-box;
}
html, body {
    margin: 0;
    height: 100%;
    overflow: hidden;
}
body {
    font-family: "Noto Sans", "Liberation Sans", sans-serif;
    color: #222;
}
.defs {
    position: absolute;
    width: 0;
    height: 0;
}
svg {
    display: block;
    flex: none;
}
i {
    display: block;
    font-style: normal;
}
.white {
    color: #fff;
}
.app {
    display: flex;
    flex-direction: column;
    width: 1920px;
    height: 1080px;
}

/* AnyDesk tab row */
.tabbar {
    display: flex;
    align-items: flex-end;
    height: 38px;
    background: #ececec;
    border-bottom: 1px solid #c8c8c8;
    flex: none;
}
.brand {
    display: flex;
    align-items: center;
    width: 112px;
    height: 37px;
    padding-left: 3px;
    background: linear-gradient(#ececec 28px, #e4e4e4 28px);
}
.brand-mark {
    width: 30px;
    height: 20px;
    color: #ef443b;
}
.brand-name {
    margin-left: 6px;
    font-size: 15.5px;
    font-weight: 700;
    color: #5e5e5e;
}
.session-tab {
    display: flex;
    align-items: center;
    width: 204px;
    height: 36px;
    margin-bottom: -1px;
    padding-left: 7px;
    background: #f1f1f1;
    border: 1px solid #c8c8c8;
    border-bottom: 0;
}
.tab-screen {
    width: 18px;
    height: 18px;
    color: #333;
}
.tab-id {
    margin-left: 9px;
    width: 144px;
    font-size: 15px;
    color: #444;
}
.tab-close {
    width: 12px;
    height: 12px;
}
.new-tab {
    width: 20px;
    height: 20px;
    margin: 0 0 7px 7px;
}
.ctl-buttons {
    display: flex;
    gap: 43px;
    margin: 0 22px 13px auto;
}
.ctl-buttons svg {
    width: 12px;
    height: 12px;
}

/* AnyDesk toolbar */
.toolbar {
    display: flex;
    align-items: center;
    height: 41px;
    padding-left: 9px;
    background: #f1f1f1;
    border-bottom: 1px solid #c8c8c8;
    flex: none;
}
.tb-perm {
    width: 22px;
    height: 22px;
}
.address {
    display: flex;
    align-items: center;
    width: 500px;
    height: 34px;
    margin-left: 9px;
    padding-left: 11px;
    background: #fff;
    border: 1px solid #dcdcdc;
}
.addr-ok {
    width: 20px;
    height: 20px;
}
.addr-text {
    margin-left: 12px;
    padding-left: 12px;
    width: 354px;
    border-left: 1px solid #ccc;
    font-size: 18px;
    line-height: 26px;
    color: #000;
    font-family: "Liberation Sans", sans-serif;
}
.addr-icon {
    width: 18px;
    height: 20px;
    margin-right: 4px;
}
.addr-icon:last-child {
    margin-left: 4px;
}
.display-btn {
    position: relative;
    display: flex;
    justify-content: center;
    align-items: center;
    width: 40px;
    height: 35px;
    margin-left: 12px;
    background: #dcdcdc;
}
.display-chip {
    width: 25px;
    height: 20px;
    margin-top: -2px;
    background: #222;
    color: #eee;
    font: 700 13px/20px "Liberation Sans", sans-serif;
    text-align: center;
}
.display-dot {
    position: absolute;
    left: 19px;
    bottom: 2px;
    width: 3px;
    height: 3px;
    border-radius: 50%;
    background: #2a6fd6;
}
.tb-icon {
    width: 22px;
    height: 22px;
    margin-left: 24px;
}
.tb-send {
    margin-left: 15px;
}
.tb-chat {
    margin-left: 30px;
}
.tb-right {
    display: flex;
    margin-left: auto;
    padding-right: 16px;
}
.tb-right .tb-icon {
    margin-left: 32px;
}

/* Remote desktop */
.remote {
    position: relative;
    flex: 1;
    background: linear-gradient(#808080 90%, #5e5e5e 100%);
}
.paint-window {
    position: absolute;
    left: 276px;
    top: 91px;
    display: flex;
    flex-direction: column;
    width: 1367px;
    height: 769px;
    background: #fffff8;
    border-top: 1px solid #222;
    border-left: 1px solid #444;
    border-right: 3px solid #0a0ad4;
}
.titlebar {
    display: flex;
    align-items: center;
    height: 23px;
    background: #e9081f;
    color: #fff;
    font-size: 12px;
    flex: none;
}
.qat {
    display: flex;
    align-items: center;
    width: 171px;
}
.qat-logo {
    width: 16px;
    height: 16px;
}
.qat-sep {
    width: 1px;
    height: 15px;
    margin: 0 10px 0 7px;
    background: #f58a94;
}
.qat-btn {
    width: 14px;
    height: 14px;
    margin-right: 8px;
}
.qat-more {
    width: 7px;
    height: 7px;
    margin-right: 2px;
}
.context-tab {
    width: 64px;
    height: 23px;
    background: #bcee90;
    color: #3a4a3a;
    font-size: 11px;
    line-height: 21px;
    text-align: center;
}
.doc-title {
    margin-left: 13px;
    font-weight: 500;
    font-size: 11.5px;
}
.win-btns {
    display: flex;
    gap: 33px;
    margin-left: auto;
    padding-right: 16px;
}
.win-btns svg {
    width: 12px;
    height: 12px;
}

.ribbon-tabs {
    display: flex;
    align-items: center;
    height: 24px;
    border-bottom: 1px solid #8fd060;
    background: #fffff8;
    font-size: 11px;
    color: #333;
    flex: none;
}
.rtab {
    height: 24px;
    line-height: 23px;
    text-align: center;
}
.rtab-file {
    width: 56px;
    background: #1479d4;
    color: #fff;
}
.rtab-home {
    width: 57px;
}
.rtab-view {
    width: 58px;
}
.rtab-text {
    width: 63px;
    background: #f5feff;
    border: 1px solid #8fd060;
    border-bottom: 0;
}
.ribbon-min {
    width: 9px;
    height: 6px;
    margin-left: auto;
}
.help {
    width: 14px;
    height: 14px;
    margin: 0 1px 0 13px;
    border-radius: 50%;
    background: #1a6fc4;
    color: #fff;
    font: 700 11px/14px "Liberation Sans", sans-serif;
    text-align: center;
}

/* Ribbon */
.ribbon {
    display: flex;
    height: 91px;
    background: #f5feff;
    font-size: 10.5px;
    color: #3a3a3a;
    flex: none;
}
.rgroup {
    display: flex;
    flex-direction: column;
    height: 86px;
    margin-top: 3px;
    border-right: 1px solid #e2ecec;
}
.rbody {
    display: flex;
    height: 71px;
}
.rbody-col {
    flex-direction: column;
}
.rlabel {
    font-size: 10.5px;
    line-height: 15px;
    color: #555;
    text-align: center;
}
.rg-clip {
    width: 107px;
}
.rg-font {
    width: 150px;
}
.rg-bg {
    width: 98px;
}
.rg-colors {
    width: 357px;
}
.rg-3d {
    width: 62px;
}
.paste {
    display: flex;
    flex-direction: column;
    align-items: center;
    width: 27px;
    margin: 4px 0 0 13px;
}
.paste-icon {
    width: 27px;
    height: 32px;
}
.paste-label {
    margin-top: 4px;
    color: #888;
}
.clip-actions {
    margin: 1px 0 0 13px;
}
.clip-row {
    display: flex;
    align-items: center;
    height: 22px;
}
.clip-icon {
    width: 14px;
    height: 16px;
    margin-right: 4px;
}
.rg-font .rbody {
    padding: 9px 0 0 4px;
}
.select {
    position: relative;
    display: flex;
    align-items: center;
    height: 22px;
    padding-left: 2px;
    border: 1px solid #b5b5d0;
    background: #fffffa;
    font-size: 10.5px;
}
.select-arrow {
    position: absolute;
    right: 4px;
    top: 8px;
    border: 3px solid transparent;
    border-top: 4px solid #333;
}
.font-name {
    width: 139px;
}
.font-tools {
    display: flex;
    align-items: center;
    margin-top: 7px;
}
.font-size {
    width: 43px;
}
.fmt {
    width: 22px;
    margin-left: 1px;
    color: #2a3a5a;
    font: 700 12px "Liberation Serif", serif;
    text-align: center;
}
.fmt-b {
    margin-left: 3px;
}
.fmt-i {
    font-style: italic;
}
.fmt-u {
    text-decoration: underline;
    margin-left: 2px;
}
.fmt-s {
    font-size: 10px;
    font-weight: 400;
    text-decoration: line-through;
}
.rg-bg .rbody {
    padding: 1px 0 0 4px;
}
.bg-opt {
    display: flex;
    align-items: center;
    width: 87px;
    height: 22px;
    padding-left: 3px;
}
.bg-on {
    padding-left: 2px;
    background: #cfeaff;
    border: 1px solid #7fa8e0;
}
.bg-icon {
    width: 15px;
    height: 15px;
    margin-right: 4px;
}
.color-pick {
    display: flex;
    flex-direction: column;
    align-items: center;
    height: 66px;
    margin-top: 1px;
}
.color-1 {
    width: 42px;
    margin-left: 4px;
    padding-top: 2px;
    background: #cfeaff;
    border: 1px solid #7fa8e0;
}
.color-2 {
    width: 42px;
    padding-top: 7px;
}
.cswatch {
    display: block;
    width: 31px;
    height: 32px;
    border: 1px solid #888;
    outline: 1px solid #fffff8;
    outline-offset: -2px;
}
.cswatch-black {
    background: #000;
}
.cswatch-white {
    width: 23px;
    height: 24px;
    background: #fffff8;
}
.color-label {
    margin-top: 3px;
    line-height: 13px;
    text-align: center;
}
.color-1 .color-label {
    margin-top: 4px;
}
.color-2 .color-label {
    margin-top: 8px;
}
.palette {
    display: grid;
    grid-template-columns: repeat(10, 20px);
    grid-auto-rows: 20px;
    gap: 2px;
    margin: 2px 0 0 2px;
}
.palette i {
    border: 1px solid #a9aca0;
    outline: 1px solid #fffff8;
    outline-offset: -2px;
}
.p-1 { background: #000; }
.p-2 { background: #7a7c6e; }
.p-3 { background: #880015; }
.p-4 { background: #ed1c24; }
.p-5 { background: #ff7f27; }
.p-6 { background: #fff200; }
.p-7 { background: #22b14c; }
.p-8 { background: #00a2e8; }
.p-9 { background: #3f48cc; }
.p-10 { background: #a349a4; }
.p-11 { background: #fffff8; }
.p-12 { background: #c3c8bc; }
.p-13 { background: #b97a57; }
.p-14 { background: #ffaec9; }
.p-15 { background: #ffc90e; }
.p-16 { background: #efe4b0; }
.p-17 { background: #b5e61d; }
.p-18 { background: #99d9ea; }
.p-19 { background: #7092be; }
.p-20 { background: #c8bfe7; }
.big-tool {
    display: flex;
    flex-direction: column;
    align-items: center;
    width: 46px;
    padding-top: 5px;
}
.edit-colors {
    margin-left: -3px;
}
.rg-3d .big-tool {
    width: 60px;
    padding-top: 4px;
}
.spectrum {
    width: 29px;
    height: 29px;
}
.drop3d {
    width: 30px;
    height: 31px;
}
.big-label {
    margin-top: 6px;
    line-height: 13px;
    text-align: center;
}

/* Canvas */
.workspace {
    position: relative;
    display: flex;
    height: 564px;
    overflow: hidden;
    background: linear-gradient(#d4d5ee 396px, #dcdcf3 396px);
    flex: none;
}
.canvas-area {
    flex: 1;
    padding: 6px 0 0 5px;
}
.canvas {
    position: relative;
    width: 1268px;
    height: 662px;
    padding: 4px 0 0 7px;
    background: #fffff8;
    box-shadow: 6px 0 0 #c6c7e4;
}
.canvas-handle {
    position: absolute;
    left: 1269px;
    top: 329px;
    width: 5px;
    height: 5px;
    background: #fff;
    border: 1px solid #444;
}
.vscroll {
    display: flex;
    flex-direction: column;
    justify-content: space-between;
    width: 14px;
    padding: 6px 2px;
    background: #fffff8;
}
.vscroll svg {
    width: 10px;
    height: 6px;
}
.hscroll {
    position: absolute;
    left: 32px;
    bottom: 0;
    width: 1146px;
    height: 4px;
    background: #ccccc8;
}
.shot {
    width: 1213px;
    border-right: 1px solid #f0f0e8;
    font-family: "DejaVu Sans", sans-serif;
    font-size: 10.8px;
    color: #111;
}
.shot-top {
    display: flex;
    height: 346px;
    padding-left: 217px;
    border-top: 2px solid #6f7063;
    border-left: 2px solid #6f7063;
}
.outer-group {
    width: 744px;
    height: 322px;
    margin-top: 15px;
    padding: 7px 0 0 48px;
    border-top: 2px solid #6f7063;
    border-left: 2px solid #6f7063;
    border-bottom: 1px solid #f0f0e6;
    border-right: 1px solid #f0f0e6;
}
.group {
    border-top: 2px solid #6f7063;
    border-left: 2px solid #6f7063;
    border-right: 1px solid #eeeee4;
    border-bottom: 1px solid #eeeee4;
}
.group-top {
    position: relative;
    display: flex;
    width: 650px;
    height: 75px;
}
.group-bill {
    width: 652px;
    height: 228px;
    margin-top: 4px;
}
.gt-left {
    width: 323px;
    padding-top: 9px;
}
.gt-row {
    display: flex;
    align-items: center;
}
.gt-row-2 {
    margin-top: 4px;
}
.big-lbl {
    width: 114px;
    margin-right: 13px;
    margin-bottom: 5px;
    font: 15.5px "Liberation Sans", sans-serif;
    color: #222;
    text-align: right;
    white-space: nowrap;
}
.gt-row-2 .big-lbl {
    width: 116px;
    margin: 7px 11px 0 0;
}
.gt-right {
    margin-left: 19px;
    padding-top: 2px;
}
.gt-row-mobile {
    margin-top: 6px;
}
.lbl {
    flex: none;
    font: 700 12px "Liberation Sans", sans-serif;
    letter-spacing: -.2px;
    white-space: nowrap;
}
.l-dod {
    width: 79px;
    margin-top: 6px;
    padding-left: 12px;
}
.l-mobile {
    width: 80px;
}
.field {
    position: relative;
    display: flex;
    align-items: center;
    flex: none;
    height: 23px;
    padding-left: 3px;
    background: #fffffa;
    border: 1px solid #6c6c66;
    white-space: nowrap;
}
.field-off {
    border-color: #c8ccc6;
    color: #7c7c78;
}
.chev {
    width: 9px;
    height: 5px;
    margin-left: auto;
    margin-right: 4px;
}
.cal {
    width: 17px;
    height: 12px;
    margin-left: auto;
    margin-right: 6px;
}
.f-house {
    width: 196px;
    border-color: #8a8a84;
}
.house-val {
    height: 17px;
    margin: 0 0 4px 54px;
    padding-right: 1px;
    border-right: 1px solid #111;
    font: 16px/17px "Liberation Sans", sans-serif;
}
.f-tenant {
    width: 196px;
    height: 34px;
    border-color: #1a8ccf;
    align-items: flex-start;
}
.caret {
    width: 1px;
    height: 15px;
    margin: 2px 0 0 2px;
    background: #111;
}
.f-dod {
    width: 115px;
}
.text-box {
    position: absolute;
    left: 181px;
    top: 6px;
    width: 165px;
    height: 47px;
    border: 1px dashed #1a8ccf;
    pointer-events: none;
}
.h {
    position: absolute;
    width: 5px;
    height: 5px;
    background: #fffff8;
    border: 1px solid #555;
}
.h-tl { left: -3px; top: -3px; }
.h-tc { left: 80px; top: -3px; }
.h-tr { right: -3px; top: -3px; }
.h-ml { left: -3px; top: 21px; }
.h-mr { right: -3px; top: 21px; }
.h-bl { left: -3px; bottom: -3px; }
.h-bc { left: 80px; bottom: -3px; }
.h-br { right: -3px; bottom: -3px; }

.row {
    display: flex;
    align-items: center;
}
.row-1 {
    height: 24px;
    margin-top: 3px;
    align-items: flex-start;
}
.row-1 .lbl {
    line-height: 20px;
}
.row-1 .picker {
    margin-top: 2px;
}
.l-main {
    width: 114px;
    margin-right: 12px;
    text-align: right;
}
.row-1 .l-bill {
    margin-right: 13px;
    line-height: 24px;
}
.f-bill {
    width: 115px;
}
.l-book {
    width: 61px;
    margin-left: 12px;
}
.f-book {
    width: 108px;
    height: 22px;
}
.l-billno {
    width: 47px;
    margin-left: 9px;
}
.f-billno {
    width: 130px;
    height: 22px;
}
.row-2 {
    align-items: flex-start;
}
.col-left {
    width: 324px;
    padding-top: 8px;
}
.col-left .l-main {
    margin-top: 2px;
}
.col-left .row-tenant .l-main {
    margin-top: 0;
}
.f-wide {
    width: 198px;
    height: 22px;
    padding-left: 5px;
}
.row-room {
    margin-top: 5px;
}
.row-tenant {
    margin-top: 3px;
}
.f-name {
    height: 33px;
    align-items: flex-start;
    padding-top: 4px;
}
.col-right {
    margin-left: 26px;
}
.l-cts {
    width: 78px;
    margin-top: 6px;
}
.row-house .l-cts {
    margin: 0 0 6px;
}
.f-cts {
    width: 182px;
}
.row-house {
    margin-top: 7px;
}
.row-3 {
    margin-top: 3px;
}
.l-rent {
    width: 185px;
    margin-right: 7px;
    margin-bottom: 2px;
    text-align: right;
    letter-spacing: -.1px;
}
.f-from {
    width: 132px;
}
.from-month {
    margin-left: 19px;
}
.from-year {
    margin-left: 17px;
}
.l-to {
    width: 101px;
    margin-left: 44px;
}
.f-to {
    width: 142px;
    padding-left: 1px;
}
.row-4 {
    margin-top: 4px;
}
.l-at {
    padding-right: 27px;
    margin-bottom: 2px;
}
.f-mid {
    width: 124px;
    height: 22px;
}
.picker.f-mid {
    height: 23px;
}
.l-months {
    width: 95px;
    margin-left: 17px;
    margin-bottom: 2px;
    letter-spacing: 0;
}
.f-months {
    width: 79px;
    height: 22px;
}
.l-total {
    width: 55px;
    margin-left: 8px;
    margin-top: 2px;
}
.f-total {
    width: 108px;
    height: 22px;
}
.row-5 {
    margin-top: 1px;
}
.l-recv {
    margin-bottom: 5px;
    letter-spacing: 0;
}
.l-agree {
    width: 103px;
    margin-left: 10px;
}
.f-agree {
    width: 142px;
}
.form-btn {
    flex: none;
    padding: 0;
    background: #eef1ea;
    border: 1px solid #a8aaa4;
    color: #111;
    font: 11px "Liberation Sans", sans-serif;
}
.btn-clear {
    width: 92px;
    height: 20px;
    margin-left: 15px;
    font-family: "DejaVu Sans", sans-serif;
    font-size: 10px;
    letter-spacing: -.2px;
}
.row-6 {
    margin-top: 4px;
}
.l-extra {
    margin-bottom: 2px;
}
.l-notes {
    width: 58px;
    margin-left: 55px;
    margin-bottom: 4px;
}
.f-notes {
    width: 250px;
}
.side-panel {
    margin-left: 6px;
    padding-top: 2px;
}
.side-title {
    margin-left: 7px;
    font: 700 12px/14px "Liberation Sans", sans-serif;
}
.side-search {
    display: flex;
    align-items: flex-start;
    margin-top: 1px;
}
.f-side {
    width: 166px;
    height: 21px;
    margin-top: 1px;
}
.btn-short {
    width: 66px;
    height: 21px;
    margin-left: 8px;
    font-weight: 700;
}
.btn-big {
    display: block;
    width: 67px;
    height: 35px;
    margin-left: 41px;
    font-weight: 700;
}
.btn-ok {
    margin-top: 18px;
    background: #cbcfc6;
    color: #a9a400;
}
.btn-print {
    margin-top: 24px;
}

/* Data grid */
.grid-wrap {
    position: relative;
    width: 1204px;
    height: 204px;
    margin-left: 2px;
    overflow: hidden;
    border-top: 2px solid #111;
    border-left: 2px solid #333;
    border-right: 1px solid #111;
}
.grid {
    width: 1185px;
    table-layout: fixed;
    border-collapse: collapse;
    font: 11px "Liberation Sans", sans-serif;
    color: #222;
}
.grid th {
    height: 34px;
    padding: 0 0 0 8px;
    overflow: hidden;
    font-weight: 400;
    line-height: 13px;
    letter-spacing: -.1px;
    text-align: left;
    white-space: nowrap;
    border-right: 1px solid #eeeee6;
    border-bottom: 1px solid #a5a5a0;
}
.grid th.mid {
    text-align: center;
    padding-left: 0;
}
.grid td {
    height: 22px;
    padding: 0 0 0 3px;
    overflow: hidden;
    white-space: nowrap;
    border-right: 1px solid #a5a5a0;
    border-bottom: 1px solid #a5a5a0;
}
.grid td:nth-child(3) {
    letter-spacing: -.2px;
}
.grid th:nth-child(1) { width: 59px; }
.grid th:nth-child(2) { width: 40px; }
.grid th:nth-child(3) { width: 138px; }
.grid th:nth-child(4) { width: 35px; }
.grid th:nth-child(5) { width: 70px; }
.grid th:nth-child(6) { width: 38px; }
.grid th:nth-child(7) { width: 40px; }
.grid th:nth-child(8) { width: 50px; }
.grid th:nth-child(9) { width: 50px; }
.grid th:nth-child(10) { width: 50px; }
.grid th:nth-child(11) { width: 90px; }
.grid th:nth-child(12) { width: 74px; }
.grid th:nth-child(13) { width: 70px; }
.grid th:nth-child(14) { width: 70px; }
.grid th:nth-child(15) { width: 50px; }
.grid th:nth-child(16) { width: 40px; }
.grid th:nth-child(17) { width: 50px; }
.grid th:nth-child(18) { width: 43px; }
.grid th:nth-child(19) { width: 48px; }
.grid th:nth-child(20) { width: 47px; }
.grid th:nth-child(21) { width: 33px; }
.grid-scroll {
    position: absolute;
    right: 0;
    top: 0;
    bottom: 0;
    width: 16px;
    background: #fffff8;
}
.gs-arrow {
    position: absolute;
    left: 4px;
    top: 5px;
    width: 9px;
    height: 6px;
}
.gs-arrow:last-child {
    top: auto;
    bottom: 6px;
}
.gs-thumb {
    position: absolute;
    left: 1px;
    top: 162px;
    width: 15px;
    height: 17px;
    background: #ccccc8;
}

/* Paint status bar */
.statusbar {
    display: flex;
    height: 26px;
    background: #fffff8;
    font: 11.5px "Liberation Sans", sans-serif;
    color: #333;
    flex: none;
}
.st-cell {
    display: flex;
    align-items: center;
    gap: 5px;
    width: 156px;
    padding-left: 6px;
    border-right: 1px solid #eaeae4;
}
.st-move {
    padding-left: 4px;
}
.st-cell svg {
    width: 13px;
    height: 13px;
}
.st-spacer {
    width: 544px;
}
.st-zoom {
    display: flex;
    align-items: center;
    flex: 1;
    padding-left: 21px;
    border-left: 1px solid #eaeae4;
}
.zoom-val {
    width: 35px;
}
.zoom-btn {
    width: 16px;
    height: 16px;
    border: 1px solid #777;
    border-radius: 50%;
    font: 700 14px/13px "Liberation Sans", sans-serif;
    text-align: center;
    color: #555;
}
.slider {
    position: relative;
    width: 85px;
    height: 4px;
    margin: 0 11px;
    background: #e2ebe4;
}
.slider-thumb {
    position: absolute;
    left: 38px;
    top: -8px;
    width: 10px;
    height: 18px;
    background: #1a74e8;
    clip-path: polygon(0 0, 100% 0, 100% 75%, 50% 100%, 0 75%);
}

/* Taskbar inside the remote window */
.inner-taskbar {
    position: relative;
    display: flex;
    height: 40px;
    background: #12140f;
    color: #eee;
    flex: none;
}
.slot {
    position: relative;
    display: flex;
    justify-content: center;
    align-items: center;
    width: 49px;
    height: 40px;
}
.slot-anydesk {
    background: #a8561f;
    border-bottom: 2px solid #f26a00;
}
.slot-open::after {
    content: "";
    position: absolute;
    left: 2px;
    right: 8px;
    bottom: 1px;
    height: 2px;
    background: #f08ca0;
}
.slot-paint {
    background: #3c3c3c;
}
.slot-paint::after {
    left: 0;
    right: 0;
}
.ic-18 {
    width: 17px;
    height: 17px;
}
.ic-24 {
    width: 24px;
    height: 24px;
}
.cortana {
    width: 14px;
    height: 18px;
    border: 2.5px solid #eee;
    border-radius: 50%;
}
.count {
    position: absolute;
    left: 23px;
    top: 19px;
    width: 28px;
    height: 16px;
    border-radius: 8px;
    background: #333;
    border: 1px solid #888;
    font: 700 11px/14px "Liberation Sans", sans-serif;
    text-align: center;
    color: #fff;
}
.inner-tray {
    display: flex;
    align-items: center;
    margin-left: 350px;
    font-size: 12px;
}
.battery {
    width: 49px;
    height: 20px;
    background: linear-gradient(90deg, #1f8f45 25px, #000 25px);
    border: 2px solid #fff;
    color: #eee;
    font: 14px/16px "Liberation Sans", sans-serif;
    text-align: center;
}
.battery-nub {
    width: 2px;
    height: 10px;
    background: #fff;
}
.it-drop {
    width: 6px;
    height: 14px;
    margin-left: 8px;
}
.it-sun {
    width: 20px;
    height: 22px;
    margin-left: 97px;
}
.it-temp {
    width: 38px;
    margin-left: 10px;
    color: #c9c9c0;
    font-size: 13px;
    font-weight: 500;
}
.it-haze {
    width: 47px;
    color: #c9c9c0;
    font-size: 13px;
    font-weight: 500;
}
.it-chev {
    width: 12px;
    height: 7px;
}
.it-power {
    width: 17px;
    height: 14px;
    margin-left: 9px;
}
.it-speaker {
    width: 16px;
    height: 16px;
    margin-left: 6px;
    color: #ddd;
}
.it-wifi {
    width: 15px;
    height: 14px;
    margin-left: 12px;
}
.it-eng {
    margin-left: 9px;
    width: 26px;
    font-size: 11px;
    color: #ddd;
}
.it-clock {
    display: flex;
    flex-direction: column;
    align-items: center;
    width: 72px;
    margin-left: 3px;
    font-size: 11.5px;
    line-height: 18px;
    color: #ddd;
}
.it-notif {
    position: relative;
    width: 16px;
    height: 14px;
    margin-left: 10px;
    margin-top: -6px;
}
.it-bubble {
    width: 16px;
    height: 14px;
}
.it-badge {
    position: absolute;
    left: 6px;
    top: 7px;
    width: 17px;
    height: 17px;
    border-radius: 50%;
    background: #333;
    border: 1px solid #777;
    font: 700 12px/15px "Liberation Sans", sans-serif;
    text-align: center;
}
.cursor {
    position: absolute;
    left: 1044px;
    top: 32px;
    width: 10px;
    height: 12px;
}

/* Local Windows taskbar */
.taskbar {
    display: flex;
    align-items: center;
    height: 50px;
    background: #38060c;
    color: #f2f2f2;
    flex: none;
}
.apps {
    display: flex;
    margin-left: -2px;
}
.app-slot {
    position: relative;
    display: flex;
    justify-content: center;
    align-items: center;
    width: 62px;
    height: 50px;
}
.app-slot.on::after {
    content: "";
    position: absolute;
    left: 6px;
    width: 50px;
    bottom: 0;
    height: 3px;
    background: #ffa0aa;
}
.app-slot.multi::after {
    background: linear-gradient(90deg, #ffa0aa 40px, #d08a92 40px);
}
.ic-22 {
    width: 21px;
    height: 21px;
}
.ic-30 {
    width: 30px;
    height: 30px;
}
.cortana-lg {
    width: 17px;
    height: 19px;
}
.badge {
    position: absolute;
    left: 38px;
    top: 24px;
    width: 19px;
    height: 21px;
    border-radius: 50%;
    background: #7a1420;
    border: 1px solid #b58;
    font: 700 14px/19px "Liberation Sans", sans-serif;
    text-align: center;
    color: #eee;
}
.badge-red {
    left: 36px;
    background: #f00;
    border: 0;
    line-height: 21px;
}
.tray {
    display: flex;
    align-items: center;
    margin-left: 199px;
    color: #fff;
}
.tr-cloud {
    width: 26px;
    height: 22px;
}
.tr-temp {
    width: 37px;
    margin-left: 13px;
    font-size: 16px;
    white-space: nowrap;
}
.tr-chev {
    width: 14px;
    height: 8px;
    margin-left: 22px;
}
.tr-drive {
    width: 18px;
    height: 14px;
    margin-left: 14px;
}
.tr-power {
    width: 19px;
    height: 15px;
    margin-left: 12px;
}
.tr-wifi {
    width: 18px;
    height: 16px;
    margin-left: 13px;
}
.tr-sound {
    width: 20px;
    height: 18px;
    margin-left: 9px;
}
.tr-pen {
    width: 18px;
    height: 22px;
    margin-left: 16px;
}
.tr-eng {
    width: 30px;
    margin-left: 18px;
    font-size: 14px;
    color: #eee;
}
.tr-clock {
    display: flex;
    flex-direction: column;
    align-items: center;
    width: 76px;
    margin-left: 16px;
    font-size: 13px;
    line-height: 23px;
}
.tr-notif {
    position: relative;
    width: 20px;
    height: 18px;
    margin-left: 22px;
    margin-top: -6px;
}
.tr-bubble {
    width: 20px;
    height: 18px;
}
.tr-badge {
    position: absolute;
    left: 8px;
    top: 8px;
    width: 19px;
    height: 21px;
    border-radius: 50%;
    background: #7a1420;
    border: 1px solid #b58;
    font: 700 13px/19px "Liberation Sans", sans-serif;
    text-align: center;
}
```
